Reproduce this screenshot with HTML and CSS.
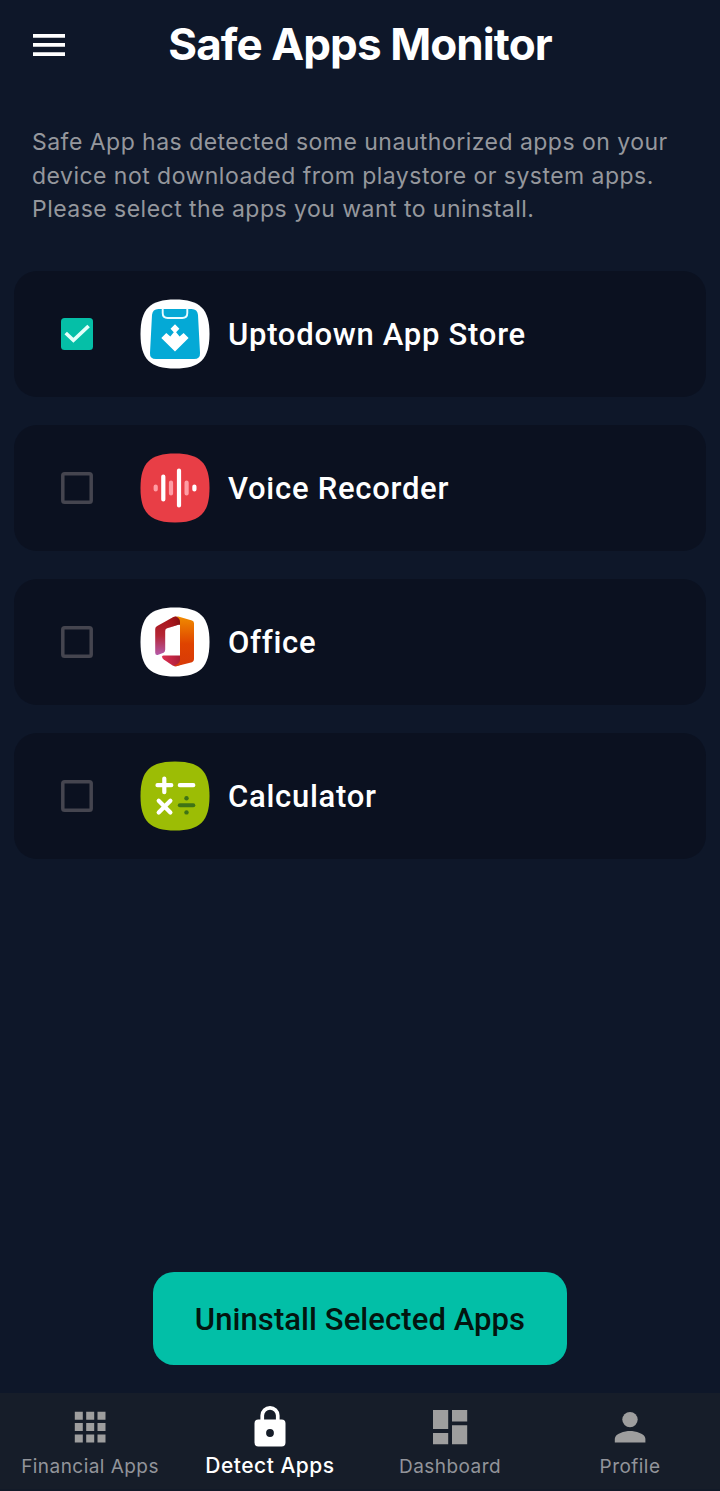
FILE: index.html
```html
<!DOCTYPE html>
<html lang="en">
<head>
<meta charset="utf-8">
<title>Safe Apps Monitor</title>
<link rel="stylesheet" href="styles.css">
</head>
<body>
<div class="screen">
  <header class="topbar">
    <svg class="menu" viewBox="0 0 32 22"><path fill="#fff" d="M0 0h32v3.7H0zM0 9.1h32v3.7H0zM0 18.2h32v3.7H0z"/></svg>
    <h1 class="title">Safe Apps Monitor</h1>
  </header>
  <p class="intro">Safe App has detected some unauthorized apps on your<br>device not downloaded from playstore or system apps.<br>Please select the apps you want to uninstall.</p>
  <main class="list">
    <label class="card">
      <svg class="check" viewBox="0 0 32 32"><rect width="32" height="32" rx="3.5" fill="#05bfa7"/><path d="M4.700 15 12.400 22.300 27.600 8" fill="none" stroke="#e4fffa" stroke-width="3.700"/></svg>
      <svg class="icon" viewBox="0 0 70 70">
        <path fill="#fff" d="M35 .5C60 .5 69.500 10 69.500 35S60 69.500 35 69.500.5 60 .5 35 10 .5 35 .5z"/>
        <path fill="#04a9d6" d="M18.500 10h33q6 0 6.500 6l2 38q.4 6-6 6H16q-6.400 0-6-6l2-38q.5-6 6.500-6z"/>
        <path d="M22.700 9.500v4.500q0 5 5 5h14.600q5 0 5-5V9.500" fill="none" stroke="#e8fbff" stroke-width="1.900"/>
        <path fill="#fff" d="M35 25.300l4.400 4.500-3.300 3.500 3.500 4.200 4-3.500 5 5L35 52.500 21.300 39l5-5 4 3.500 3.500-4.200-3.300-3.500z"/>
      </svg>
      <span class="name">Uptodown App Store</span>
    </label>
    <label class="card">
      <svg class="check" viewBox="0 0 32 32"><rect x="1.800" y="1.800" width="28.400" height="28.400" rx="1.800" fill="none" stroke="#45454f" stroke-width="3.500"/></svg>
      <svg class="icon" viewBox="0 0 70 70">
        <path fill="#e83e46" d="M35 .5C60 .5 69.500 10 69.500 35S60 69.500 35 69.500.5 60 .5 35 10 .5 35 .5z"/>
        <g fill="none" stroke-linecap="round" stroke-width="4.200"><path stroke="#ff9da4" d="M15.700 33.500v3M31 29.500v11M46.600 29.500v11"/><path stroke="#fff" d="M23.300 23.500v23M39 17.500v35M54.400 33.500v3"/></g>
      </svg>
      <span class="name">Voice Recorder</span>
    </label>
    <label class="card">
      <svg class="check" viewBox="0 0 32 32"><rect x="1.800" y="1.800" width="28.400" height="28.400" rx="1.800" fill="none" stroke="#45454f" stroke-width="3.500"/></svg>
      <svg class="icon" viewBox="0 0 70 70">
        <defs>
          <linearGradient id="left" x2="0" y2="1"><stop stop-color="#a51417"/><stop offset=".5" stop-color="#b52636"/><stop offset="1" stop-color="#b55aa8"/></linearGradient>
          <linearGradient id="right" x2="0" y2="1"><stop stop-color="#f08b00"/><stop offset=".55" stop-color="#df4300"/><stop offset="1" stop-color="#d83a08"/></linearGradient>
          <linearGradient id="base"><stop stop-color="#dc2f52"/><stop offset="1" stop-color="#a81c35"/></linearGradient>
          <linearGradient id="fold"><stop stop-color="#b51218" stop-opacity="0"/><stop offset="1" stop-color="#7c0f10"/></linearGradient>
        </defs>
        <path fill="#fff" d="M35 .5C60 .5 69.500 10 69.500 35S60 69.500 35 69.500.5 60 .5 35 10 .5 35 .5z"/>
        <path fill="url(#left)" d="M33.500 10q2-.8 4 0l5 2.500v5.200h-4L27 21.200q-1.800.7-1.800 2.700v18.500q0 2.200-1.600 3.300l-5.300 2q-3.100.8-3.100-2V22q0-2 2-3z"/>
        <path fill="url(#fold)" d="M25 14.500 33.500 10q2-.8 4 0l4 2v5.500h-3l-13.500 4.700z"/>
        <path fill="url(#base)" d="M23.500 48.500h18v9L37 59q-2 .6-4-.2l-9.300-6.200q-2-1.500-1.600-3 .4-1.100 1.400-1.100z"/>
        <path fill="url(#right)" d="M36.500 9.800q1.800-.5 3.500.1l12 3.500q2 .6 2 2.800v36q0 2.200-2 3L37 59.100q-2 .5-3-.2l4-2.200q2-1.300 2-3.700V15q0-3.500-3.500-5.200z"/>
      </svg>
      <span class="name">Office</span>
    </label>
    <label class="card">
      <svg class="check" viewBox="0 0 32 32"><rect x="1.800" y="1.800" width="28.400" height="28.400" rx="1.800" fill="none" stroke="#45454f" stroke-width="3.500"/></svg>
      <svg class="icon" viewBox="0 0 70 70">
        <path fill="#9cbd05" d="M35 .5C60 .5 69.500 10 69.500 35S60 69.500 35 69.500.5 60 .5 35 10 .5 35 .5z"/>
        <path d="M17.500 24.200h13.800M24.300 17.500v13.700M39.800 24.200h13.500M18.700 39.700l11.700 11.800M30.400 39.700 18.700 51.500" fill="none" stroke="#fff" stroke-width="4.200" stroke-linecap="round"/>
        <path d="M39.800 44.300h13.500" stroke="#3f7316" stroke-width="4" stroke-linecap="round"/><circle cx="46.500" cy="37.300" r="2.200" fill="#3f7316"/><circle cx="46.500" cy="51.400" r="2.200" fill="#3f7316"/>
      </svg>
      <span class="name">Calculator</span>
    </label>
  </main>
  <button class="action">Uninstall Selected Apps</button>
  <nav class="tabs">
    <a class="tab"><svg viewBox="0 0 40 40"><path d="M4.800 4.800h8v8h-8zM16.200 4.800h8v8h-8zM27.500 4.800h8v8h-8zM4.800 16.100h8v8h-8zM16.200 16.100h8v8h-8zM27.500 16.100h8v8h-8zM4.800 27.400h8v8h-8zM16.200 27.400h8v8h-8zM27.500 27.400h8v8h-8z"/></svg><span>Financial Apps</span></a>
    <a class="tab active"><svg viewBox="0 0 40 40"><path fill-rule="evenodd" d="M31.600 12.400h-2V8.600a9.600 9.600 0 0 0-19.200 0v3.800h-2a3.900 3.900 0 0 0-3.900 3.900v19.300a3.900 3.900 0 0 0 3.900 3.900h23.200a3.900 3.900 0 0 0 3.900-3.900V16.300a3.900 3.900 0 0 0-3.900-3.900zM14.100 8.600a5.900 5.900 0 0 1 11.800 0v3.800H14.100zM20 29.900a3.900 3.900 0 1 1 0-7.800 3.900 3.900 0 0 1 0 7.800z"/></svg><span>Detect Apps</span></a>
    <a class="tab"><svg viewBox="0 0 40 40"><path d="M3 3h15.200v19H3zM3 26h15.200v11.300H3zM22 3h15.200v11.600H22zM22 18.300h15.200v19H22z"/></svg><span>Dashboard</span></a>
    <a class="tab"><svg viewBox="0 0 40 40"><circle cx="20" cy="12.600" r="7.700"/><path d="M20 24c-5.100 0-15.200 2.600-15.200 7.700v3.900h30.600v-3.900C35.400 26.600 25.100 24 20 24z"/></svg><span>Profile</span></a>
  </nav>
</div>
</body>
</html>
```
FILE: styles.css
```css
* { box-sizing: border-box; }
body { margin: 0; background: #0e1729; }
.screen {
  display: flex;
  flex-direction: column;
  width: 720px;
  height: 1491px;
  background: #0e1729;
  color: #fff;
  font-family: Inter, sans-serif;
}
.topbar {
  display: grid;
  grid-template-columns: 32px 1fr 32px;
  align-items: center;
  height: 90px;
  padding: 0 33px;
}
.menu { width: 32px; height: 22px; }
.title {
  margin: 0;
  padding-bottom: 2px;
  text-align: center;
  white-space: nowrap;
  font-size: 44px;
  line-height: 54px;
  font-weight: 700;
  letter-spacing: -0.9px;
}
.intro {
  margin: 36px 0 0;
  padding-left: 32px;
  color: #95979d;
  font-size: 23px;
  line-height: 33.5px;
  letter-spacing: 0.47px;
  white-space: nowrap;
}
.list {
  display: flex;
  flex-direction: column;
  gap: 28px;
  padding: 0 14px;
  margin-top: 44.5px;
}
.card {
  display: flex;
  align-items: center;
  height: 126px;
  padding-left: 47px;
  border-radius: 23px;
  background: #0b1120;
}
.check { width: 32px; height: 32px; }
.icon { width: 70px; height: 70px; margin: 0 18px 0 47px; }
.name {
  padding-top: 2px;
  font: 500 31px/40px Roboto, sans-serif;
  letter-spacing: 0.73px;
  white-space: nowrap;
}
.action {
  width: 414px;
  height: 93px;
  margin: auto auto 28px;
  padding: 2px 0 0;
  border: 0;
  border-radius: 21px;
  background: #02bfa7;
  color: #03150f;
  font: 500 31px/40px Roboto, sans-serif;
  letter-spacing: 0.08px;
  white-space: nowrap;
}
.tabs {
  display: grid;
  grid-template-columns: repeat(4, 1fr);
  height: 98px;
  background: #161d29;
  border-bottom: 2px solid #121a28;
}
.tab {
  display: flex;
  flex-direction: column;
  align-items: center;
  padding-top: 14px;
  color: #92949a;
  font-size: 19px;
  line-height: 24px;
  letter-spacing: 0.45px;
  white-space: nowrap;
}
.tab svg { width: 40px; height: 40px; margin-bottom: 8px; fill: #9e9e9e; overflow: visible; }
.tab.active { color: #fff; font-size: 21px; font-weight: 500; letter-spacing: 0.5px; }
.tab.active svg { fill: #fff; margin-bottom: 7px; }
```
